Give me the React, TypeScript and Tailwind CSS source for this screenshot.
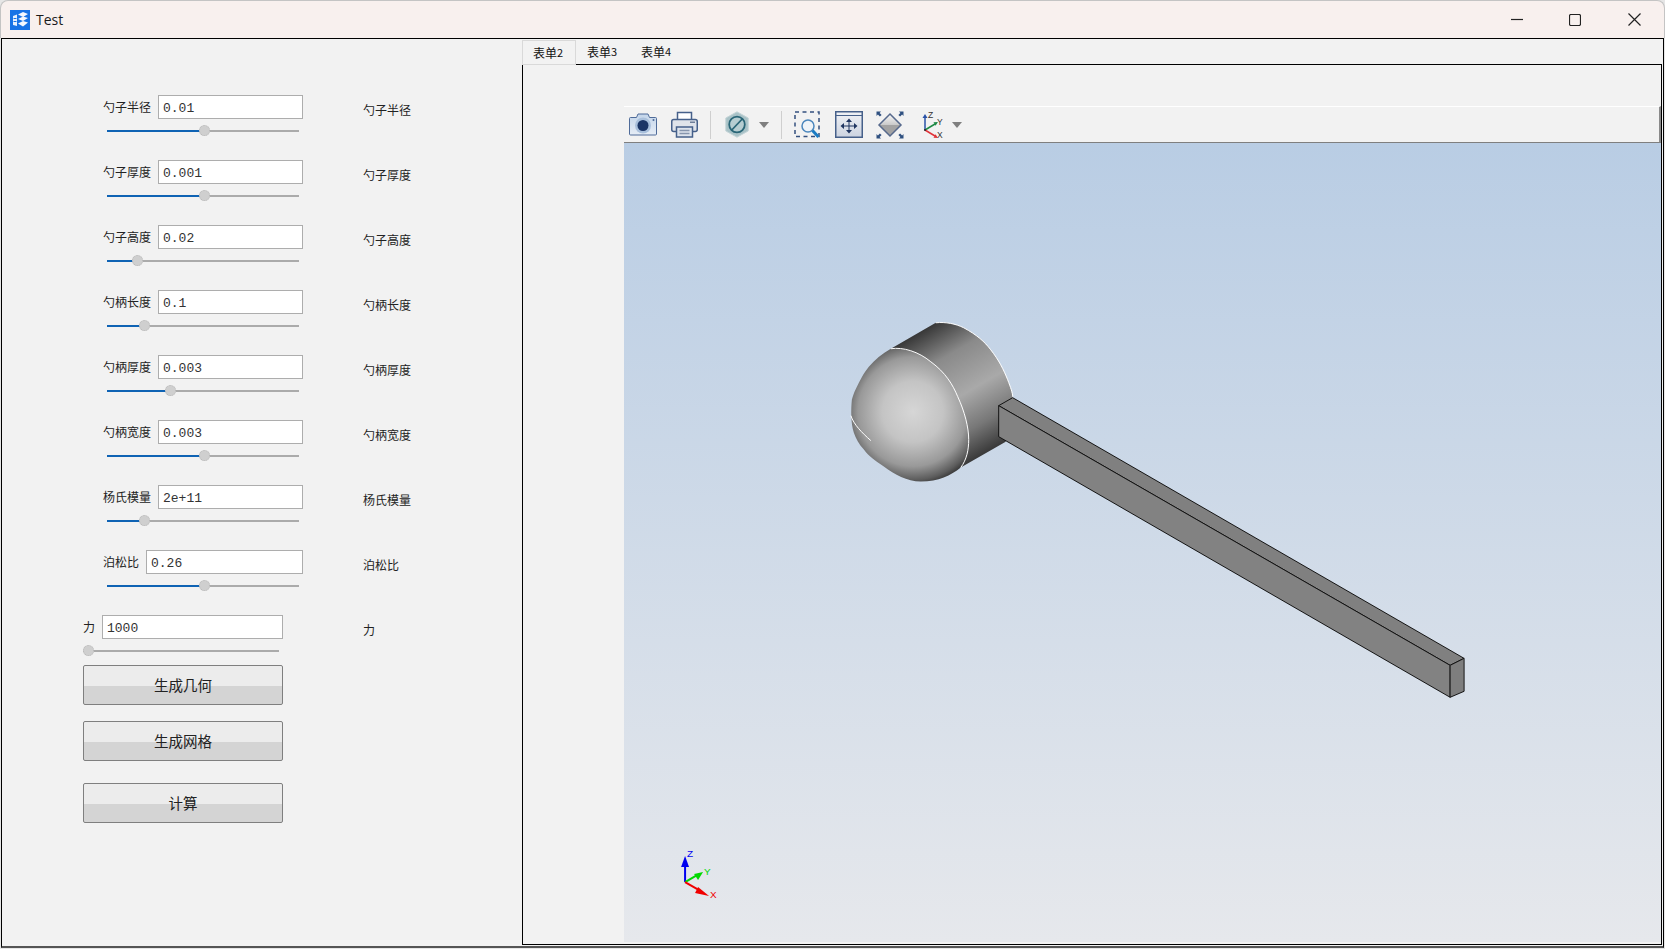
import React from 'react';

const cjk = "font-['Noto_Sans_CJK_SC','Noto_Sans',sans-serif]";

type FieldProps = {
  label: string;
  value: string;
  pos: number;
  rowPad?: string;
  inputW?: string;
  sliderW?: string;
  sliderMl?: string;
  h?: string;
};

const fields: FieldProps[] = [
  { label: '勺子半径', value: '0.01', pos: 97 },
  { label: '勺子厚度', value: '0.001', pos: 97 },
  { label: '勺子高度', value: '0.02', pos: 30 },
  { label: '勺柄长度', value: '0.1', pos: 37 },
  { label: '勺柄厚度', value: '0.003', pos: 63 },
  { label: '勺柄宽度', value: '0.003', pos: 97 },
  { label: '杨氏模量', value: '2e+11', pos: 37 },
  { label: '泊松比', value: '0.26', pos: 97, inputW: 'w-[157px]' },
  { label: '力', value: '1000', pos: 5, rowPad: 'pl-[81px]', inputW: 'w-[181px]', sliderW: 'w-[196px]', sliderMl: 'ml-0', h: 'h-[50px]' },
];

const Slider = ({ pos, width, ml, filled }: { pos: number; width: string; ml: string; filled: boolean }) => (
  <div className={`relative h-[2px] mt-[11px] bg-[#ababab] ${width} ${ml}`}>
    {filled && <div className="h-full bg-[#0f63b4]" style={{ width: pos }} />}
    <div className="absolute top-[-5px] w-[11px] h-[11px] rounded-full bg-[#cfcfcf] border border-dotted border-[#b8b8b8]" style={{ left: pos - 5 }} />
  </div>
);

const Field = ({ label, value, pos, rowPad = 'pl-[101px]', inputW = 'w-[145px]', sliderW = 'w-[192px]', sliderMl = 'ml-[4px]', h = 'h-[65px]' }: FieldProps) => (
  <div className={`grid grid-cols-[361px_1fr] ${h}`}>
    <div className={rowPad}>
      <div className="flex items-center gap-[7px]">
        <span className={`pb-[1px] text-[12px] leading-[16px] text-[#222] ${cjk}`}>{label}</span>
        <div className={`h-[24px] border border-[#adadad] bg-white pl-[4px] pt-[4px] flex items-center text-[13px] text-[#333] font-['Liberation_Mono',monospace] ${inputW}`}>{value}</div>
      </div>
      <Slider pos={pos} width={sliderW} ml={sliderMl} filled={pos > 5} />
    </div>
    <div className={`pt-[7px] text-[12px] leading-[16px] text-[#222] ${cjk}`}>{label}</div>
  </div>
);

const Btn = ({ text, mt }: { text: string; mt: string }) => (
  <button className={`block w-[200px] h-[40px] ${mt} rounded-[2px] border border-[#7f7f7f] bg-[linear-gradient(#ececec_52%,#d4d4d4_52%)] text-[14.5px] text-[#222] ${cjk}`}>{text}</button>
);

const Tab = ({ name, num, active }: { name: string; num: string; active?: boolean }) => (
  <div className={`flex items-center justify-center pr-[2px] text-[12px] text-[#111] w-[54px] h-[25px] ${cjk} ${active ? 'relative z-10 w-[53px] mt-[1px] -mb-px border border-[#d9d9d9] bg-[#f2f2f2]' : ''}`}>
    {name}<span className="text-[11px]">{num}</span>
  </div>
);

const Caret = ({ ml }: { ml: string }) => (
  <svg width="10" height="6" viewBox="0 0 10 6" className={ml}><path d="M0 0h10L5 6z" fill="#7f7f7f" /></svg>
);

const Sep = () => <div className="ml-[12px] w-px h-[28px] bg-[#cfcfcf]" />;

const AppIcon = () => (
  <svg width="20" height="20" viewBox="0 0 20 20">
    <rect width="20" height="20" fill="#1773e6" />
    <path d="M3 6l4-1.500V16l-4-1z" fill="#e6f0fd" />
    <path d="M8 4.500L13 2l5 2-5 3z M8 9l5-2.500 5 1.500-5 3z M8 13.500l5-2.500 5 1.500-5 4z" fill="#f4f8fe" />
    <path d="M3.500 8.500h3M3.500 11.500h3" stroke="#1773e6" strokeWidth="1" />
  </svg>
);

const CameraIcon = () => (
  <svg width="28" height="23" viewBox="0 0 28 23" className="ml-[5px]">
    <defs>
      <linearGradient id="camBody" x1="0" y1="0" x2="0" y2="1">
        <stop offset="0" stopColor="#c3d5ea" />
        <stop offset="1" stopColor="#e6edf6" />
      </linearGradient>
    </defs>
    <path d="M1.500 4.500h6l1.500-3.500h10l1.500 3.500h6a1 1 0 0 1 1 1V21a1 1 0 0 1-1 1h-25a1 1 0 0 1-1-1V5.500a1 1 0 0 1 1-1z" fill="url(#camBody)" stroke="#4f6b99" strokeWidth="1" />
    <circle cx="14" cy="12.500" r="8" fill="#a9c0dc" />
    <circle cx="14" cy="12.500" r="5.500" fill="#1b3566" />
    <circle cx="24.500" cy="7" r="1" fill="#4f6b99" />
  </svg>
);

const PrinterIcon = () => (
  <svg width="27" height="27" viewBox="0 0 27 27" className="ml-[14px]">
    <path d="M6.500 9V1.500h14V9" fill="#fff" stroke="#46608a" strokeWidth="1.500" />
    <rect x="0.750" y="8.500" width="25.500" height="12" rx="2" fill="#dfe3ea" stroke="#46608a" strokeWidth="1.500" />
    <rect x="19" y="10.500" width="5" height="1.500" fill="#6f7f99" />
    <rect x="5.500" y="16" width="16" height="10" fill="#dde3ec" stroke="#46608a" strokeWidth="1.500" />
    <path d="M8.500 19.500h10M8.500 22.500h10" stroke="#8695ad" strokeWidth="1.500" />
  </svg>
);

const HexIcon = () => (
  <svg width="24" height="27" viewBox="0 0 24 27" className="ml-[14px]">
    <path d="M12 .8L23.200 7v13L12 26.200.8 20V7z" fill="#a9c2c7" stroke="#c6d5d8" strokeWidth="1" />
    <circle cx="12" cy="13.500" r="7.800" fill="#b6cdd1" stroke="#2a6677" strokeWidth="1.800" />
    <path d="M6.800 19l10.400-11" stroke="#2a6677" strokeWidth="1.800" />
  </svg>
);

const ZoomBoxIcon = () => (
  <svg width="26" height="27" viewBox="0 0 26 27" className="ml-[12px]">
    <rect x="1" y="1" width="24" height="24.500" fill="none" stroke="#34507f" strokeWidth="1.500" strokeDasharray="4 3.500" />
    <circle cx="14" cy="15" r="6" fill="#eef3f8" stroke="#4a86bd" strokeWidth="1.500" />
    <path d="M18.500 19.500l6 6.500" stroke="#1b7cc4" strokeWidth="3" />
  </svg>
);

const FitIcon = () => (
  <svg width="28" height="27" viewBox="0 0 28 27" className="ml-[15px]">
    <defs>
      <linearGradient id="fitBody" x1="0" y1="0" x2="0" y2="1">
        <stop offset="0" stopColor="#f0f2f6" />
        <stop offset="1" stopColor="#ccd3e0" />
      </linearGradient>
    </defs>
    <rect x="0.750" y="0.750" width="26.500" height="25.500" fill="url(#fitBody)" stroke="#46608a" strokeWidth="1.500" />
    <path d="M1 4.500h26" stroke="#46608a" strokeWidth="1" />
    <path d="M14 9v11M8 15h12" stroke="#1f3560" strokeWidth="1" />
    <path d="M14 7.500l-3 3.500h6zM14 22.500l-3-3.500h6zM5.500 15l3.500-3v6zM22.500 15l-3.500-3v6z" fill="#1f3560" />
  </svg>
);

const DiamondIcon = () => (
  <svg width="28" height="28" viewBox="0 0 28 28" className="ml-[13px]">
    <defs>
      <linearGradient id="diaTop" x1="0" y1="0" x2="0" y2="1">
        <stop offset="0" stopColor="#fafafa" />
        <stop offset="1" stopColor="#c9c9c9" />
      </linearGradient>
    </defs>
    <path d="M14 3l11 11H3z" fill="url(#diaTop)" />
    <path d="M3 14h22L14 25z" fill="#a3a3a3" />
    <path d="M14 3l11 11-11 11L3 14z" fill="none" stroke="#56698c" strokeWidth="1.500" />
    <path d="M0.500 0.500h4.500L3.600 1.900l2 2-1.700 1.700-2-2L0.500 5zM27.500 0.500H23l1.400 1.400-2 2 1.700 1.700 2-2L27.500 5zM0.500 27.500H5l-1.400-1.400 2-2-1.700-1.700-2 2L0.500 23zM27.500 27.500H23l1.400-1.400-2-2 1.700-1.700 2 2 1.400-1.400z" fill="#2f5080" />
  </svg>
);

const AxesIcon = () => (
  <svg width="25" height="28" viewBox="0 0 25 28" className="ml-[16px] font-['Liberation_Sans',sans-serif]">
    <path d="M5 19V6" stroke="#2a52a8" strokeWidth="1.500" />
    <path d="M5 3l-2.500 4h5z" fill="#2a52a8" />
    <path d="M5 19l10-6" stroke="#1f8a45" strokeWidth="1.500" />
    <path d="M18 11l-4.500.3 2 3.400z" fill="#1f8a45" />
    <path d="M5 19l10 6" stroke="#e0343a" strokeWidth="1.500" />
    <path d="M18 27l-4.500-.3 2-3.400z" fill="#e0343a" />
    <circle cx="5" cy="19" r="1" fill="#222" />
    <text x="8" y="7" fontSize="8.500" fill="#333">Z</text>
    <text x="17" y="14" fontSize="8.500" fill="#333">Y</text>
    <text x="17" y="27" fontSize="8.500" fill="#333">X</text>
  </svg>
);

const Scene = () => (
  <svg className="absolute inset-0 w-full h-full font-['Liberation_Sans',sans-serif]" viewBox="624 143 1036 800">
    <defs>
      <linearGradient id="cyl" gradientUnits="userSpaceOnUse" x1="930" y1="326" x2="999" y2="445">
        <stop offset="0" stopColor="#383838" />
        <stop offset="0.25" stopColor="#8a8a8a" />
        <stop offset="0.55" stopColor="#a9a9a9" />
        <stop offset="0.8" stopColor="#777" />
        <stop offset="1" stopColor="#3a3a3a" />
      </linearGradient>
      <radialGradient id="dome" gradientUnits="userSpaceOnUse" cx="912" cy="412" r="76">
        <stop offset="0" stopColor="#d6d6d6" />
        <stop offset="0.4" stopColor="#c4c4c4" />
        <stop offset="0.72" stopColor="#999" />
        <stop offset="0.9" stopColor="#5c5c5c" />
        <stop offset="1" stopColor="#2a2a2a" />
      </radialGradient>
    </defs>
    {/* cup */}
    <path d="M890 349L935 323C945 322 955 324 963 328C976 335 984 342 990 350C998 360 1003 370 1007 380C1010 388 1012 393 1012 400L1005 442L960 468Z" fill="url(#cyl)" />
    <path d="M890 349C902 348 918 352 930 362C945 373 952 385 957 397C964 412 968 428 968 440C968 450 966 460 960 468C950 476 938 482 920 482C906 482 894 475 883 467C874 461 868 457 863 450C858 444 855 439 853 433C850 424 850 410 851 400C853 393 855 389 858 383C861 377 864 372 868 367C874 360 881 354 890 349Z" fill="url(#dome)" />
    <path d="M890 349C902 347 918 352 930 362C945 373 952 385 957 397C964 412 968 428 968 440C968 450 966 460 960 468" fill="none" stroke="#fff" strokeWidth="1" />
    <path d="M935 323C945 322 955 324 963 328C976 335 984 342 990 350C998 360 1003 370 1007 380C1010 388 1012 393 1012 397" fill="none" stroke="#fff" strokeWidth="1" />
    <path d="M850 416C853 425 861 433 870 441" fill="none" stroke="#fff" strokeWidth="1" />
    {/* handle */}
    <g stroke="#141414" strokeWidth="1" strokeLinejoin="round" shapeRendering="crispEdges">
      <path d="M998 406L1012 398L1464 659L1450 666Z" fill="#808080" />
      <path d="M998 406L1450 666V698L998 437Z" fill="#828282" />
      <path d="M1450 666L1464 659V692L1450 698Z" fill="#7e7e7e" />
    </g>
    {/* axes */}
    <path d="M684 883V864" stroke="#0000f0" strokeWidth="2" />
    <path d="M684 857L680 868H688Z" fill="#0000f0" />
    <path d="M684 883L696 876" stroke="#00d800" strokeWidth="2" />
    <path d="M702 873L693 875L697 881Z" fill="#00d800" />
    <path d="M684 883L698 891" stroke="#f00000" strokeWidth="2" />
    <path d="M708 897L697 888L694 894Z" fill="#f00000" />
    <text x="686" y="858" fontSize="10" fill="#0000f0">Z</text>
    <text x="703" y="876" fontSize="10" fill="#00d800">Y</text>
    <text x="709" y="899" fontSize="10" fill="#f00000">X</text>
  </svg>
);

export default function App() {
  return (
    <div className="w-[1665px] h-[949px] overflow-hidden bg-[#e6e6e6] flex flex-col">
      <div className="h-[38px] shrink-0 flex items-center rounded-t-[8px] border-t border-x border-[#c4c4c4] bg-[#f8f0ee] pl-[9px] pr-[1px]">
        <AppIcon />
        <span className="ml-[6px] text-[14px] text-[#1a1a1a] font-['Open_Sans',sans-serif]">Test</span>
        <div className="ml-auto flex">
          <div className="w-[58px] h-[38px] flex items-center justify-center">
            <svg width="12" height="12" viewBox="0 0 12 12"><path d="M0 5.500h12" stroke="#222" strokeWidth="1.200" /></svg>
          </div>
          <div className="w-[58px] h-[38px] mr-px flex items-center justify-center">
            <svg width="12" height="12" viewBox="0 0 12 12"><rect x=".5" y=".5" width="11" height="11" rx="1.500" fill="none" stroke="#222" strokeWidth="1.200" /></svg>
          </div>
          <div className="w-[58px] h-[38px] flex items-center justify-center">
            <svg width="13" height="13" viewBox="0 0 13 13"><path d="M.5.5l12 12M12.500.5l-12 12" stroke="#222" strokeWidth="1.200" /></svg>
          </div>
        </div>
      </div>

      <div className="ml-px w-[1663px] h-[910px] flex border-t border-x border-black border-b-2 border-b-[#555] bg-[#f2f2f2]">
        <div className="w-[520px] shrink-0 pt-[56px]">
          {fields.map((f) => <Field key={f.label} {...f} />)}
          <div className="pl-[81px]">
            <Btn text="生成几何" mt="mt-0" />
            <Btn text="生成网格" mt="mt-[16px]" />
            <Btn text="计算" mt="mt-[22px]" />
          </div>
        </div>

        <div className="flex-1 flex flex-col pr-px">
          <div className="h-[25px] flex shrink-0">
            <Tab name="表单" num="2" active />
            <Tab name="表单" num="3" />
            <Tab name="表单" num="4" />
          </div>
          <div className="flex-1 mb-[1px] border border-black pt-[41px] pb-[2px] pl-[101px] flex flex-col min-h-0">
            <div className="h-[37px] shrink-0 flex items-center border-t border-t-white border-b border-b-[#7f7f7f] border-r-2 border-r-[#8a8a8a]">
              <CameraIcon />
              <PrinterIcon />
              <Sep />
              <HexIcon />
              <Caret ml="ml-[10px]" />
              <Sep />
              <ZoomBoxIcon />
              <FitIcon />
              <DiamondIcon />
              <AxesIcon />
              <Caret ml="ml-[7px]" />
            </div>
            <div className="relative flex-1 bg-linear-to-b/srgb from-[#b9cde4] to-[#e6e8ec]">
              <Scene />
            </div>
          </div>
        </div>
      </div>
    </div>
  );
}
